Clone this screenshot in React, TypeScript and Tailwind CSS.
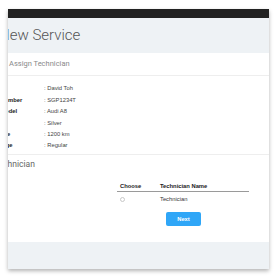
import React from 'react';

const details = [
  { label: 'Name', value: 'David Toh' },
  { label: 'Car Number', value: 'SGP1234T' },
  { label: 'Car Model', value: 'Audi A8' },
  { label: 'Color', value: 'Silver' },
  { label: 'Mileage', value: '1200 km' },
  { label: 'Package', value: 'Regular' },
];

export default function App() {
  return (
    <div className="w-[277px] h-[277px] bg-white overflow-hidden font-['Liberation_Sans',Arial,sans-serif]">
      <div className="ml-[8px] mt-[9px] w-[261px] h-[260px] flex flex-col overflow-hidden bg-white shadow-[0_2px_4px_rgba(0,0,0,0.3)]">
        <div className="h-[9px] bg-[#222222] shrink-0" />

        <div className="h-[35px] shrink-0 bg-[#eef2f5] flex items-center">
          <h1 className="ml-[-9px] text-[15px] font-light text-[#555] whitespace-nowrap font-['Roboto',sans-serif]">
            New Service
          </h1>
        </div>

        <div className="flex-1 flex flex-col">
          <div className="h-[23px] flex items-center border-b border-[#eeeeee] shrink-0">
            <span className="ml-[1px] text-[7.5px] text-[#8a8a8a] font-['Roboto',sans-serif]">Assign Technician</span>
          </div>

          <div className="pt-[7px] pb-[3px] border-b border-[#eeeeee]">
            {details.map((d) => (
              <div key={d.label} className="flex items-center h-[11.4px] text-[5.8px] text-[#222]">
                <span className="ml-[-19px] w-[55px] shrink-0 font-bold whitespace-nowrap overflow-hidden">
                  {d.label}
                </span>
                <span className="text-[#444] whitespace-nowrap">: {d.value}</span>
              </div>
            ))}
          </div>

          <div className="h-[18px] flex items-center">
            <span className="ml-[-14px] text-[8.5px] text-[#666] font-['Roboto',sans-serif]">Technician</span>
          </div>

          <div className="ml-[109px] w-[132px] mt-[8px]">
            <div className="flex items-center h-[11px] border-b border-[#9a9a9a] text-[5.8px] font-bold text-[#222]">
              <span className="pl-[3px] w-[43px]">Choose</span>
              <span>Technician Name</span>
            </div>
            <div className="flex items-center h-[14px] text-[5.8px] text-[#333]">
              <span className="pl-[3px] w-[43px] flex items-center">
                <span className="w-[5px] h-[5px] rounded-full border border-[#c8c8c8] bg-white" />
              </span>
              <span>Technician</span>
            </div>
          </div>

          <div className="ml-[158px] mt-[6px]">
            <button className="w-[35px] h-[14px] rounded-[2px] bg-[#2fa6f7] text-white text-[5.8px] font-bold flex items-center justify-center">
              Next
            </button>
          </div>
        </div>

        <div className="h-[27px] shrink-0 bg-[#eef2f5]" />
      </div>
    </div>
  );
}
